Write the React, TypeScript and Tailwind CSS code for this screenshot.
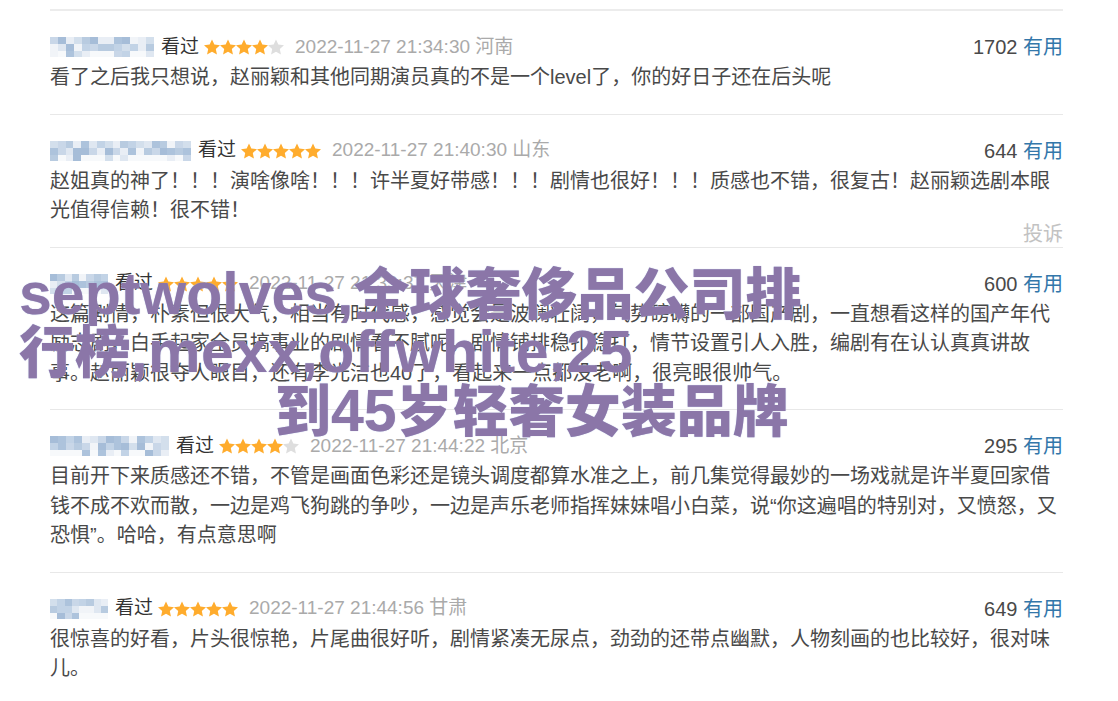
import React from "react";

type Review = {
  nameW: number;
  seed: number;
  stars: number;
  time: string;
  loc: string;
  votes: number;
  text: string;
  report?: boolean;
};

const reviews: Review[] = [
  {
    nameW: 104,
    seed: 3,
    stars: 4,
    time: "2022-11-27 21:34:30",
    loc: "河南",
    votes: 1702,
    text: "看了之后我只想说，赵丽颖和其他同期演员真的不是一个level了，你的好日子还在后头呢",
  },
  {
    nameW: 141,
    seed: 7,
    stars: 5,
    time: "2022-11-27 21:40:30",
    loc: "山东",
    votes: 644,
    text: "赵姐真的神了！！！演啥像啥！！！许半夏好带感！！！剧情也很好！！！质感也不错，很复古！赵丽颖选剧本眼光值得信赖！很不错！",
    report: true,
  },
  {
    nameW: 58,
    seed: 11,
    stars: 5,
    time: "2022-11-27 21:33:37",
    loc: "天津",
    votes: 600,
    text: "这篇剧情，朴素但很大气，相当有时代感，感觉会是波澜壮阔，气势磅礴的一部国产剧，一直想看这样的国产年代励志剧，白手起家全员搞事业的剧情看不腻呢，剧情铺排稳扎稳打，情节设置引人入胜，编剧有在认认真真讲故事。赵丽颖很夺人眼目，还有李光洁也40了，看起来一点都没老啊，很亮眼很帅气。",
  },
  {
    nameW: 119,
    seed: 5,
    stars: 4,
    time: "2022-11-27 21:44:22",
    loc: "北京",
    votes: 295,
    text: "目前开下来质感还不错，不管是画面色彩还是镜头调度都算水准之上，前几集觉得最妙的一场戏就是许半夏回家借钱不成不欢而散，一边是鸡飞狗跳的争吵，一边是声乐老师指挥妹妹唱小白菜，说“你这遍唱的特别对，又愤怒，又恐惧”。哈哈，有点意思啊",
  },
  {
    nameW: 58,
    seed: 13,
    stars: 5,
    time: "2022-11-27 21:44:56",
    loc: "甘肃",
    votes: 649,
    text: "很惊喜的好看，片头很惊艳，片尾曲很好听，剧情紧凑无尿点，劲劲的还带点幽默，人物刻画的也比较好，很对味儿。",
  },
];

const palette = [
  "#dfe7f1",
  "#c9d7e8",
  "#b8cbe0",
  "#e9eef5",
  "#adc3dc",
  "#d3dfec",
  "#f1f4f8",
  "#c2d3e6",
  "#a6bdd8",
];

function Mosaic({ w, seed }: { w: number; seed: number }) {
  const cols = Math.ceil(w / 8);
  const rows = [7, 7, 6];
  let s = seed * 9301 + 49297;
  const rnd = () => {
    s = (s * 9301 + 49297) % 233280;
    return s / 233280;
  };
  return (
    <div className="flex flex-col overflow-hidden" style={{ width: w }}>
      {rows.map((h, r) => (
        <div key={r} className="flex" style={{ height: h }}>
          {Array.from({ length: cols }).map((_, c) => {
            let col = palette[Math.floor(rnd() * palette.length)];
            if (r === 2 && rnd() > 0.35) col = "#f7f9fb";
            return <div key={c} style={{ width: 8, height: h, background: col }} />;
          })}
        </div>
      ))}
    </div>
  );
}

function Star({ on }: { on: boolean }) {
  return (
    <svg width="16" height="16" viewBox="0 0 16 16" className="block">
      <polygon
        points="8,0.4 10.35,5.56 16,6.2 11.8,10.04 12.94,15.6 8,12.8 3.06,15.6 4.2,10.04 0,6.2 5.65,5.56"
        fill={on ? "#ffac2d" : "#dedede"}
      />
    </svg>
  );
}

function ReviewItem({ r }: { r: Review }) {
  return (
    <div className="border-b border-[#e8e8e8] pt-[21px]">
      <div className="flex h-[30px] items-center justify-between">
        <div className="flex items-center">
          <Mosaic w={r.nameW} seed={r.seed} />
          <span className="ml-[7px] text-[19px] text-[#333]">看过</span>
          <span className="ml-[5px] flex">
            {[0, 1, 2, 3, 4].map((i) => (
              <Star key={i} on={i < r.stars} />
            ))}
          </span>
          <span className="ml-[11px] text-[19px] text-[#aaaaaa]">
            {r.time} {r.loc}
          </span>
        </div>
        <div className="text-[20px] text-[#494949]">
          {r.votes} <span className="text-[#3377aa]">有用</span>
        </div>
      </div>
      <p className="mt-[1px] text-[20px] leading-[29.5px] text-[#494949]">{r.text}</p>
      <div className="flex h-[21px] justify-end">
        {r.report && (
          <span className="-mt-[2px] text-[20px] leading-[20px] text-[#c2c2c2]">投诉</span>
        )}
      </div>
    </div>
  );
}

export default function App() {
  return (
    <div
      className="relative h-[701px] w-full overflow-hidden bg-white"
      style={{ fontFamily: '"Liberation Sans", Arial, "Noto Sans CJK SC", sans-serif' }}
    >
      <div className="ml-[50px] w-[1013px] pt-[9px]">
        <div className="border-t-2 border-[#ececec]">
          {reviews.map((r, i) => (
            <ReviewItem key={i} r={r} />
          ))}
        </div>
      </div>

      <div className="pointer-events-none absolute left-0 top-0 font-black text-[#8b76a8] [text-shadow:0_0_1px_#a9b6dd]">
        <div className="absolute left-[19px] top-[262px] whitespace-nowrap text-[56px] leading-[64px]">
          <span className="text-[59px]">septwolves,</span>全球奢侈品公司排
        </div>
        <div className="absolute left-[19px] top-[320px] whitespace-nowrap text-[56px] leading-[64px]">
          行榜<span className="text-[59px] tracking-[0.6px]">,mexx,offwhite,25</span>
        </div>
        <div className="absolute left-[275px] top-[379px] whitespace-nowrap text-[56px] leading-[64px]">
          到<span className="text-[59px]">45</span>岁轻奢女装品牌
        </div>
      </div>
    </div>
  );
}
